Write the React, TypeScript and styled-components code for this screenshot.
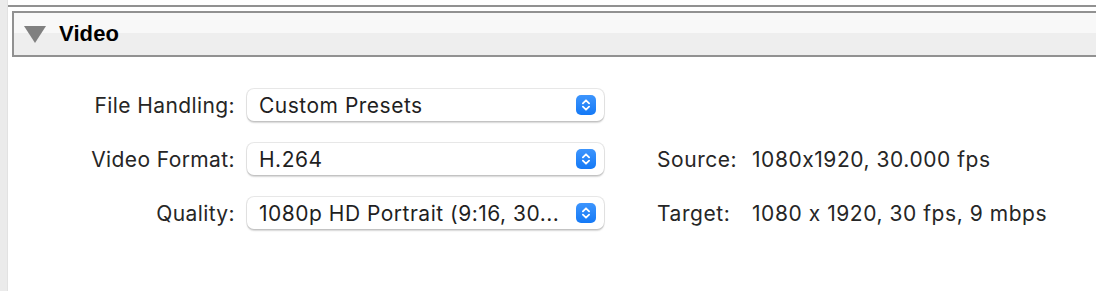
import React from "react";
import styled, { createGlobalStyle } from "styled-components";

/* Styling */
const GlobalStyle = createGlobalStyle`
    html, body {
        margin: 0;
        padding: 0;
        background: #ffffff;
    }
    body {
        font-family: Inter, "Liberation Sans", Arial, sans-serif;
        font-feature-settings: "calt" 0;
        -webkit-font-smoothing: antialiased;
    }
`;

const Page = styled.div`
    display: flex;
    width: 1096px;
    height: 291px;
    overflow: hidden;
    background: #ffffff;
`;

const SideStrip = styled.div`
    width: 7px;
    flex-shrink: 0;
    background: #ebebeb;
    border-right: 1px solid #e2e2e2;
`;

const Main = styled.div`
    flex: 1;
    display: flex;
    flex-direction: column;
`;

const TopRule = styled.div`
    margin-top: 5px;
    height: 2px;
    background: #919191;
`;

const SectionHeader = styled.div`
    margin-top: 4px;
    margin-left: 4px;
    height: 42px;
    display: flex;
    align-items: center;
    gap: 13px;
    padding-left: 10px;
    border: 2px solid #919191;
    border-right: none;
    background: linear-gradient(#f8f8f8 0, #f8f8f8 20px, #eeeeee 20px, #eeeeee 100%);
`;

const Disclosure = styled.svg`
    width: 22px;
    height: 17px;
    margin-top: 1px;
`;

const SectionTitle = styled.span`
    font-family: "Liberation Sans", Arial, sans-serif;
    font-weight: 700;
    font-size: 22px;
    color: #000000;
    letter-spacing: 0.1px;
`;

const Form = styled.div`
    display: grid;
    grid-template-columns: 227px 357px auto;
    grid-auto-rows: 32px;
    row-gap: 22px;
    column-gap: 12px;
    margin-top: 32px;
    align-items: center;
`;

const Label = styled.div`
    grid-column: 1;
    text-align: right;
    font-size: 21px;
    letter-spacing: 0.4px;
    color: #262626;
    white-space: nowrap;
`;

const Popup = styled.div`
    grid-column: 2;
    height: 32px;
    box-sizing: border-box;
    display: flex;
    align-items: center;
    justify-content: space-between;
    padding: 0 8px 0 12px;
    background: #ffffff;
    border-radius: 7px;
    box-shadow: 0 0 0 1px rgba(0, 0, 0, 0.09), 0 1.5px 1.5px rgba(0, 0, 0, 0.16);
`;

const PopupText = styled.span`
    font-size: 21px;
    letter-spacing: 0.5px;
    color: #1f1f1f;
    white-space: nowrap;
`;

const Stepper = styled.div`
    width: 20px;
    height: 20px;
    border-radius: 5px;
    background: linear-gradient(#3d95fd, #1479f6);
    display: flex;
    align-items: center;
    justify-content: center;
`;

const Info = styled.div`
    grid-column: 3;
    padding-left: 41px;
    display: grid;
    grid-template-columns: 95px auto;
    font-size: 21px;
    letter-spacing: 0.55px;
    color: #262626;
    white-space: nowrap;
`;

const rows = [
    { label: "File Handling:", value: "Custom Presets" },
    { label: "Video Format:", value: "H.264", info: ["Source:", "1080x1920, 30.000 fps"] },
    { label: "Quality:", value: "1080p HD Portrait (9:16, 30...", info: ["Target:", "1080 x 1920, 30 fps, 9 mbps"] },
];

function StepperIcon() {
    return (
        <Stepper>
            <svg width="20" height="20" viewBox="0 0 20 20">
                <path
                    d="M6.9 8.3 L10 5.3 L13.1 8.3 M6.9 11.7 L10 14.7 L13.1 11.7"
                    fill="none"
                    stroke="#ffffff"
                    strokeWidth="1.8"
                    strokeLinecap="round"
                    strokeLinejoin="round"
                />
            </svg>
        </Stepper>
    );
}

export default function App() {
    return (
        <Page>
            <GlobalStyle />
            <SideStrip />
            <Main>
                <TopRule />
                <SectionHeader>
                    <Disclosure viewBox="0 0 22 17">
                        <polygon points="0,0 22,0 11,17" fill="#808080" />
                    </Disclosure>
                    <SectionTitle>Video</SectionTitle>
                </SectionHeader>
                <Form>
                    {rows.map((row) => (
                        <React.Fragment key={row.label}>
                            <Label>{row.label}</Label>
                            <Popup>
                                <PopupText>{row.value}</PopupText>
                                <StepperIcon />
                            </Popup>
                            {row.info && (
                                <Info>
                                    <span>{row.info[0]}</span>
                                    <span>{row.info[1]}</span>
                                </Info>
                            )}
                        </React.Fragment>
                    ))}
                </Form>
            </Main>
        </Page>
    );
}
